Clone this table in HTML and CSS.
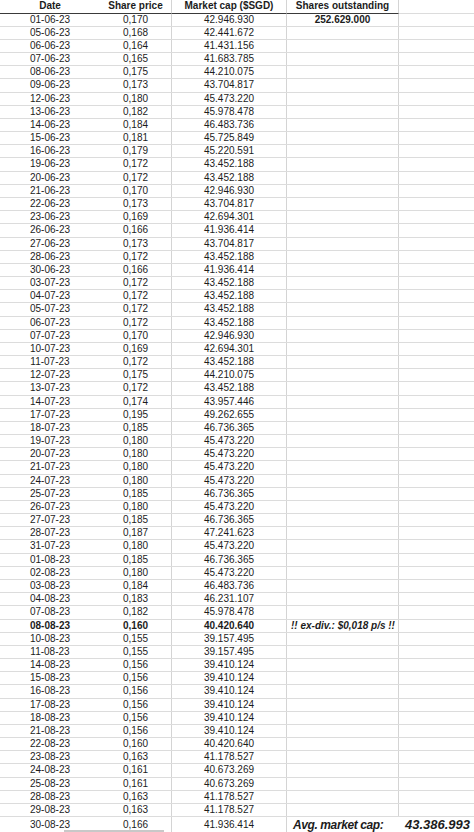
FILE: index.html
```html
<!DOCTYPE html>
<html>
<head>
<meta charset="utf-8">
<link rel="stylesheet" href="styles.css">
</head>
<body>
<div class="sheet">
<div class="r head"><span>Date</span><span>Share price</span><span>Market cap ($SGD)</span><span>Shares outstanding</span><span class="x"></span></div>
<div class="r"><span>01-06-23</span><span>0,170</span><span>42.946.930</span><span class="b">252.629.000</span><span></span></div>
<div class="r"><span>05-06-23</span><span>0,168</span><span>42.441.672</span><span></span><span></span></div>
<div class="r"><span>06-06-23</span><span>0,164</span><span>41.431.156</span><span></span><span></span></div>
<div class="r"><span>07-06-23</span><span>0,165</span><span>41.683.785</span><span></span><span></span></div>
<div class="r"><span>08-06-23</span><span>0,175</span><span>44.210.075</span><span></span><span></span></div>
<div class="r"><span>09-06-23</span><span>0,173</span><span>43.704.817</span><span></span><span></span></div>
<div class="r"><span>12-06-23</span><span>0,180</span><span>45.473.220</span><span></span><span></span></div>
<div class="r"><span>13-06-23</span><span>0,182</span><span>45.978.478</span><span></span><span></span></div>
<div class="r"><span>14-06-23</span><span>0,184</span><span>46.483.736</span><span></span><span></span></div>
<div class="r"><span>15-06-23</span><span>0,181</span><span>45.725.849</span><span></span><span></span></div>
<div class="r"><span>16-06-23</span><span>0,179</span><span>45.220.591</span><span></span><span></span></div>
<div class="r"><span>19-06-23</span><span>0,172</span><span>43.452.188</span><span></span><span></span></div>
<div class="r"><span>20-06-23</span><span>0,172</span><span>43.452.188</span><span></span><span></span></div>
<div class="r"><span>21-06-23</span><span>0,170</span><span>42.946.930</span><span></span><span></span></div>
<div class="r"><span>22-06-23</span><span>0,173</span><span>43.704.817</span><span></span><span></span></div>
<div class="r"><span>23-06-23</span><span>0,169</span><span>42.694.301</span><span></span><span></span></div>
<div class="r"><span>26-06-23</span><span>0,166</span><span>41.936.414</span><span></span><span></span></div>
<div class="r"><span>27-06-23</span><span>0,173</span><span>43.704.817</span><span></span><span></span></div>
<div class="r"><span>28-06-23</span><span>0,172</span><span>43.452.188</span><span></span><span></span></div>
<div class="r"><span>30-06-23</span><span>0,166</span><span>41.936.414</span><span></span><span></span></div>
<div class="r"><span>03-07-23</span><span>0,172</span><span>43.452.188</span><span></span><span></span></div>
<div class="r"><span>04-07-23</span><span>0,172</span><span>43.452.188</span><span></span><span></span></div>
<div class="r"><span>05-07-23</span><span>0,172</span><span>43.452.188</span><span></span><span></span></div>
<div class="r"><span>06-07-23</span><span>0,172</span><span>43.452.188</span><span></span><span></span></div>
<div class="r"><span>07-07-23</span><span>0,170</span><span>42.946.930</span><span></span><span></span></div>
<div class="r"><span>10-07-23</span><span>0,169</span><span>42.694.301</span><span></span><span></span></div>
<div class="r"><span>11-07-23</span><span>0,172</span><span>43.452.188</span><span></span><span></span></div>
<div class="r"><span>12-07-23</span><span>0,175</span><span>44.210.075</span><span></span><span></span></div>
<div class="r"><span>13-07-23</span><span>0,172</span><span>43.452.188</span><span></span><span></span></div>
<div class="r"><span>14-07-23</span><span>0,174</span><span>43.957.446</span><span></span><span></span></div>
<div class="r"><span>17-07-23</span><span>0,195</span><span>49.262.655</span><span></span><span></span></div>
<div class="r"><span>18-07-23</span><span>0,185</span><span>46.736.365</span><span></span><span></span></div>
<div class="r"><span>19-07-23</span><span>0,180</span><span>45.473.220</span><span></span><span></span></div>
<div class="r"><span>20-07-23</span><span>0,180</span><span>45.473.220</span><span></span><span></span></div>
<div class="r"><span>21-07-23</span><span>0,180</span><span>45.473.220</span><span></span><span></span></div>
<div class="r"><span>24-07-23</span><span>0,180</span><span>45.473.220</span><span></span><span></span></div>
<div class="r"><span>25-07-23</span><span>0,185</span><span>46.736.365</span><span></span><span></span></div>
<div class="r"><span>26-07-23</span><span>0,180</span><span>45.473.220</span><span></span><span></span></div>
<div class="r"><span>27-07-23</span><span>0,185</span><span>46.736.365</span><span></span><span></span></div>
<div class="r"><span>28-07-23</span><span>0,187</span><span>47.241.623</span><span></span><span></span></div>
<div class="r"><span>31-07-23</span><span>0,180</span><span>45.473.220</span><span></span><span></span></div>
<div class="r"><span>01-08-23</span><span>0,185</span><span>46.736.365</span><span></span><span></span></div>
<div class="r"><span>02-08-23</span><span>0,180</span><span>45.473.220</span><span></span><span></span></div>
<div class="r"><span>03-08-23</span><span>0,184</span><span>46.483.736</span><span></span><span></span></div>
<div class="r"><span>04-08-23</span><span>0,183</span><span>46.231.107</span><span></span><span></span></div>
<div class="r"><span>07-08-23</span><span>0,182</span><span>45.978.478</span><span></span><span></span></div>
<div class="r bold"><span>08-08-23</span><span>0,160</span><span>40.420.640</span><span class="note">!! ex-div.: $0,018 p/s !!</span><span></span></div>
<div class="r"><span>10-08-23</span><span>0,155</span><span>39.157.495</span><span></span><span></span></div>
<div class="r"><span>11-08-23</span><span>0,155</span><span>39.157.495</span><span></span><span></span></div>
<div class="r"><span>14-08-23</span><span>0,156</span><span>39.410.124</span><span></span><span></span></div>
<div class="r"><span>15-08-23</span><span>0,156</span><span>39.410.124</span><span></span><span></span></div>
<div class="r"><span>16-08-23</span><span>0,156</span><span>39.410.124</span><span></span><span></span></div>
<div class="r"><span>17-08-23</span><span>0,156</span><span>39.410.124</span><span></span><span></span></div>
<div class="r"><span>18-08-23</span><span>0,156</span><span>39.410.124</span><span></span><span></span></div>
<div class="r"><span>21-08-23</span><span>0,156</span><span>39.410.124</span><span></span><span></span></div>
<div class="r"><span>22-08-23</span><span>0,160</span><span>40.420.640</span><span></span><span></span></div>
<div class="r"><span>23-08-23</span><span>0,163</span><span>41.178.527</span><span></span><span></span></div>
<div class="r"><span>24-08-23</span><span>0,161</span><span>40.673.269</span><span></span><span></span></div>
<div class="r"><span>25-08-23</span><span>0,161</span><span>40.673.269</span><span></span><span></span></div>
<div class="r"><span>28-08-23</span><span>0,163</span><span>41.178.527</span><span></span><span></span></div>
<div class="r"><span>29-08-23</span><span>0,163</span><span>41.178.527</span><span></span><span></span></div>
<div class="r last"><span>30-08-23</span><span>0,166</span><span>41.936.414</span><span class="avg">Avg. market cap:</span><span class="avgv">43.386.993</span></div>
</div>
<div class="scroll"></div>
</body>
</html>
```
FILE: styles.css
```css
html, body {
  margin: 0;
  padding: 0;
  background: #ffffff;
}
body {
  width: 474px;
  height: 832px;
  overflow: hidden;
  position: relative;
  font-family: "Liberation Sans", Arial, sans-serif;
  font-size: 10px;
  color: #1c1c1c;
}
.sheet {
  display: flex;
  flex-direction: column;
}
.r {
  display: grid;
  grid-template-columns: 100px 72px 115px 112px 75px;
  height: 13.18px;
  box-sizing: border-box;
  border-bottom: 1px solid #dcdcdc;
  line-height: 12px;
}
.r > span {
  display: block;
  text-align: center;
  white-space: nowrap;
  overflow: visible;
  box-sizing: border-box;
}
.r > span:nth-child(2),
.r > span:nth-child(3),
.r > span:nth-child(4) {
  border-right: 1px solid #d4d4d4;
}
.head {
  height: 13.6px;
  border-bottom: none;
  font-weight: bold;
}
.head > span {
  border-bottom: 1.5px solid #3a3a3a;
}
.head > span.x {
  border-bottom: 1px solid #dcdcdc;
}
.b {
  font-weight: bold;
}
.bold {
  font-weight: bold;
}
.note {
  font-style: italic;
  text-align: left !important;
  padding-left: 4px;
}
.last {
  height: 16px;
  border-bottom: none;
  line-height: 16px;
}
.avg {
  font-weight: bold;
  font-style: italic;
  font-size: 12px;
  letter-spacing: -0.4px;
  text-align: left !important;
  padding-left: 6px;
  border-right: none !important;
}
.avgv {
  font-weight: bold;
  font-style: italic;
  font-size: 13px;
  text-align: left !important;
  padding-left: 6px;
}
.scroll {
  position: absolute;
  left: 64px;
  bottom: 0;
  width: 100px;
  height: 2px;
  background: #c8c8c8;
}
```
